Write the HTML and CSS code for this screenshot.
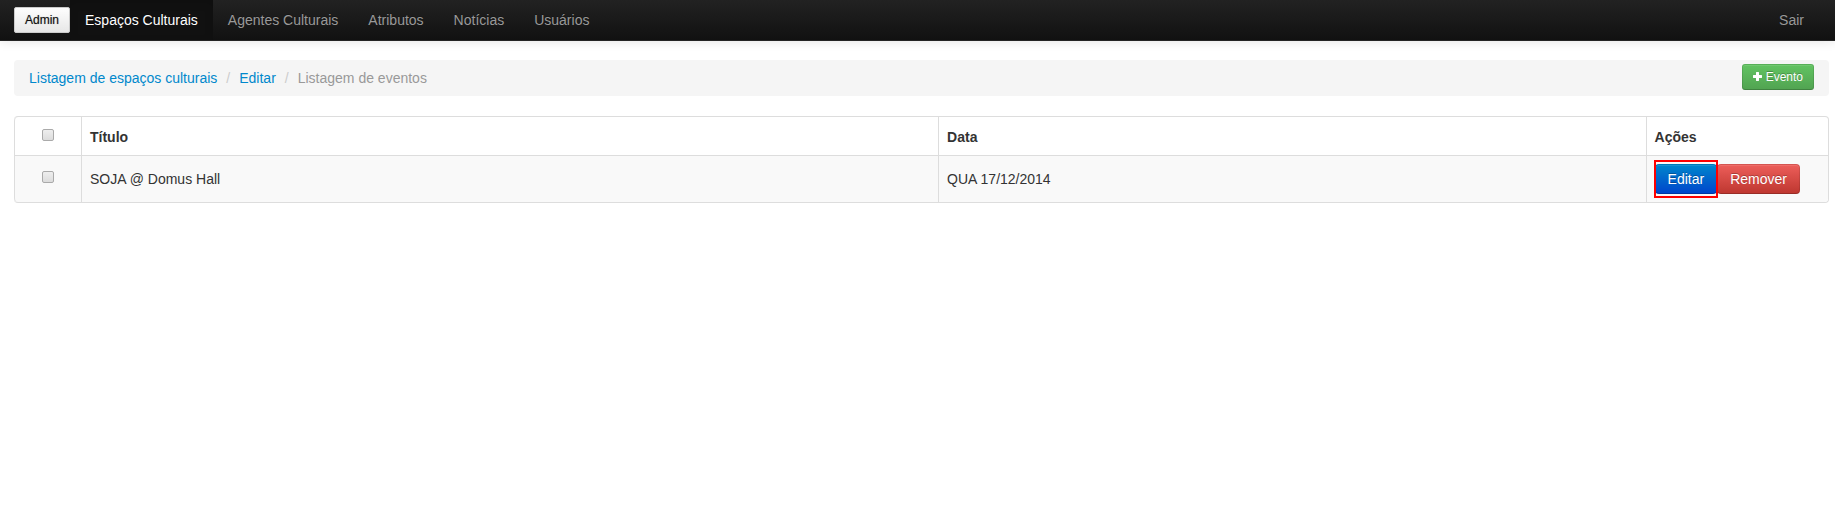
FILE: index.html
```html
<!DOCTYPE html>
<html lang="pt-BR">
<head>
<meta charset="utf-8">
<title>Listagem de eventos</title>
<link rel="stylesheet" href="styles.css">
</head>
<body>
<nav class="navbar">
  <button type="button" class="btn btn-small btn-admin">Admin</button>
  <ul class="nav">
    <li><a class="active" href="#">Espaços Culturais</a></li>
    <li><a href="#">Agentes Culturais</a></li>
    <li><a href="#">Atributos</a></li>
    <li><a href="#">Notícias</a></li>
    <li><a href="#">Usuários</a></li>
  </ul>
  <ul class="nav nav-right">
    <li><a href="#">Sair</a></li>
  </ul>
</nav>
<main class="container">
  <div class="breadcrumb">
    <a href="#">Listagem de espaços culturais</a>
    <span class="divider">/</span>
    <a href="#">Editar</a>
    <span class="divider">/</span>
    <span class="current">Listagem de eventos</span>
    <button type="button" class="btn btn-small btn-success">
      <svg class="icon" viewBox="0 0 9 9" aria-hidden="true"><path d="M3 0.4Q3 0 3.4 0H5.6Q6 0 6 0.4V3H8.6Q9 3 9 3.4V5.6Q9 6 8.6 6H6V8.6Q6 9 5.6 9H3.4Q3 9 3 8.6V6H0.4Q0 6 0 5.6V3.4Q0 3 0.4 3H3Z"/></svg>
      Evento
    </button>
  </div>
  <table class="table">
    <colgroup>
      <col class="col-check">
      <col class="col-title">
      <col class="col-date">
      <col class="col-actions">
    </colgroup>
    <thead>
      <tr>
        <th class="check"><input type="checkbox" aria-label="Selecionar todos"></th>
        <th>Título</th>
        <th>Data</th>
        <th>Ações</th>
      </tr>
    </thead>
    <tbody>
      <tr>
        <td class="check"><input type="checkbox" aria-label="Selecionar SOJA @ Domus Hall"></td>
        <td>SOJA @ Domus Hall</td>
        <td>QUA 17/12/2014</td>
        <td>
          <div class="actions">
            <button type="button" class="btn btn-primary highlighted">Editar</button>
            <button type="button" class="btn btn-danger">Remover</button>
          </div>
        </td>
      </tr>
    </tbody>
  </table>
</main>
</body>
</html>
```
FILE: styles.css
```css
* {
  box-sizing: border-box;
}

body {
  margin: 0;
  background: #fff;
  color: #333;
  font: 14px/20px "Liberation Sans", Arial, sans-serif;
}

a {
  color: #08c;
  text-decoration: none;
}

.navbar {
  display: flex;
  align-items: center;
  height: 41px;
  padding: 0 16px 0 14px;
  background: linear-gradient(#222, #111);
  border-bottom: 1px solid #252525;
  box-shadow: 0 1px 10px rgba(0, 0, 0, 0.1);
}

.nav {
  display: flex;
  margin: 0;
  padding: 0;
  list-style: none;
}

.nav-right {
  margin-left: auto;
}

.nav a {
  display: block;
  padding: 10px 15px;
  color: #999;
  text-shadow: 0 -1px 0 rgba(0, 0, 0, 0.25);
}

.nav .active {
  background: #111;
  color: #fff;
  box-shadow: inset 0 3px 8px rgba(0, 0, 0, 0.125);
}

.btn {
  padding: 4px 12px;
  border: 1px solid rgba(0, 0, 0, 0.1);
  border-bottom-color: rgba(0, 0, 0, 0.2);
  border-radius: 4px;
  color: #fff;
  font: inherit;
  text-shadow: 0 -1px 0 rgba(0, 0, 0, 0.25);
  background-origin: border-box;
  box-shadow: inset 0 1px 0 rgba(255, 255, 255, 0.1);
  cursor: pointer;
}

.btn-small {
  padding: 2px 10px;
  border-radius: 3px;
  font-size: 12px;
}

.btn-admin {
  border-color: #ccc;
  border-radius: 2px;
  background-image: linear-gradient(#fff, #e6e6e6);
  color: #111;
  text-shadow: 0 0 1px rgba(0, 0, 0, 0.4);
}

.btn-success {
  margin: 0 0 2px auto;
  background-image: linear-gradient(#62c462, #51a351);
}

.btn-primary {
  background-image: linear-gradient(#08c, #04c);
}

.btn-danger {
  background-image: linear-gradient(#ee5f5b, #bd362f);
}

.icon {
  width: 9px;
  height: 9px;
  fill: #fff;
}

.container {
  padding: 19px 6px 0 14px;
}

.breadcrumb {
  display: flex;
  align-items: center;
  height: 36px;
  margin-bottom: 20px;
  padding: 0 15px;
  border-radius: 4px;
  background: #f5f5f5;
}

.divider {
  padding: 0 9px;
  color: #ccc;
}

.current {
  color: #999;
}

.table {
  width: 100%;
  table-layout: fixed;
  border: 1px solid #ddd;
  border-left: 0;
  border-radius: 4px;
  border-spacing: 0;
}

.col-check {
  width: 67px;
}

.col-title {
  width: 47.25%;
}

.col-date {
  width: 39%;
}

.table th,
.table td {
  padding: 8px;
  border-left: 1px solid #ddd;
  text-align: left;
}

.table th {
  height: 38px;
  padding: 10px 8px 8px;
}

.table td {
  border-top: 1px solid #ddd;
  background: #f9f9f9;
}

.table th:first-child {
  border-top-left-radius: 4px;
}

.table td:first-child {
  border-bottom-left-radius: 4px;
}

.table td:last-child {
  border-bottom-right-radius: 4px;
}

.table .check {
  line-height: 0;
  text-align: center;
}

.table th.check {
  padding-bottom: 12px;
}

.table td.check {
  padding-bottom: 12px;
}

.check input {
  appearance: none;
  width: 12px;
  height: 12px;
  margin: 0;
  border: 1px solid #aaa;
  border-radius: 2px;
  background: linear-gradient(#eee, #dcdcdc);
}

.actions {
  display: flex;
}

.highlighted {
  position: relative;
}

.highlighted::after {
  content: "";
  position: absolute;
  inset: -5px -2px;
  border: 2px solid #f00;
}
```
